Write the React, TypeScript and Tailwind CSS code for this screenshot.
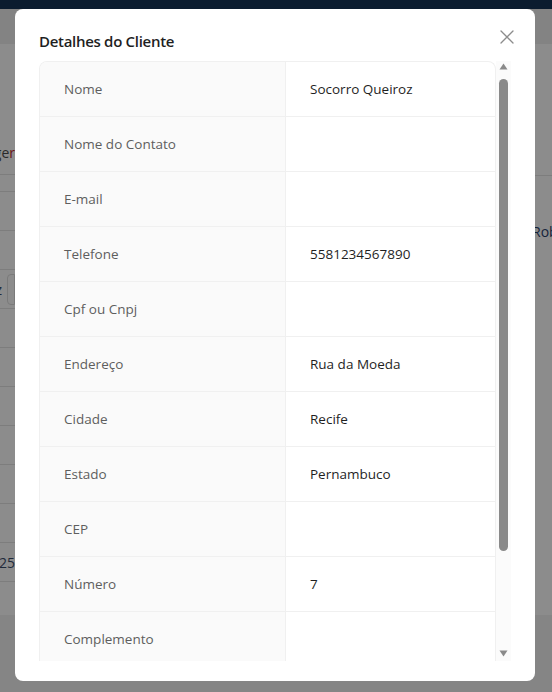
import React from 'react';

interface Field {
  label: string;
  value: string;
}

const fields: Field[] = [
  { label: 'Nome', value: 'Socorro Queiroz' },
  { label: 'Nome do Contato', value: '' },
  { label: 'E-mail', value: '' },
  { label: 'Telefone', value: '5581234567890' },
  { label: 'Cpf ou Cnpj', value: '' },
  { label: 'Endereço', value: 'Rua da Moeda' },
  { label: 'Cidade', value: 'Recife' },
  { label: 'Estado', value: 'Pernambuco' },
  { label: 'CEP', value: '' },
  { label: 'Número', value: '7' },
  { label: 'Complemento', value: '' },
  { label: 'Bairro', value: 'Recife Antigo' },
  { label: 'Observações', value: '' },
];

// linhas da tabela que fica atrás do modal (só aparecem nas bordas)
const bgRows = ['', '', 'z', '', '', '', '', '', '', '25'];

const CloseIcon = () => (
  <svg width="14" height="14" viewBox="0 0 14 14" fill="none">
    <path d="M1 1L13 13M13 1L1 13" stroke="#8c8c8c" strokeWidth="1.3" strokeLinecap="round" />
  </svg>
);

const ScrollBar = () => (
  <div className="w-[15px] shrink-0 bg-[#fbfbfb] flex flex-col items-center pt-[2px] pb-[3px]">
    <svg width="9" height="7" viewBox="0 0 9 7">
      <path d="M4.5 0.5L8.5 6.5H0.5Z" fill="#8a8a8a" />
    </svg>
    <div className="w-[9px] h-[472px] mt-[9px] rounded-full bg-[#8a8a8a]" />
    <div className="flex-1" />
    <svg width="9" height="7" viewBox="0 0 9 7" className="mb-[1px]">
      <path d="M0.5 0.5H8.5L4.5 6.5Z" fill="#8a8a8a" />
    </svg>
  </div>
);

const App: React.FC = () => {
  return (
    <div
      className="relative w-[552px] h-[692px] overflow-hidden bg-[#858585] text-[#0d1b2a]"
      style={{ fontFamily: '"Open Sans", "Noto Sans", sans-serif' }}
    >
      {/* Página por trás do overlay */}
      <div className="h-[9px] bg-[#0b1c2f]" />
      <div className="h-[35px] bg-[#838383]" />
      <div className="h-[571px] bg-[#8c8c8c] flex">
        <div className="w-[15px] shrink-0 flex flex-col">
          <div className="h-[86px]" />
          <div className="h-[44px] flex items-center justify-end whitespace-nowrap text-[14px] text-[#2a2a2a]">
            <span>ge</span>
            <span className="text-[#6b1414]">r</span>
          </div>
          <div className="h-[17px] border-t border-[#7d7d7d]" />
          {bgRows.map((t, i) => (
            <div
              key={i}
              className="h-[39px] border-t border-[#7d7d7d] flex items-center justify-end whitespace-nowrap text-[14px] text-[#1f2a3a]"
            >
              {t === 'z' ? (
                <>
                  <span>z</span>
                  <span className="ml-[5px] w-[8px] h-[31px] border border-[#7a7a7a] rounded-l-[4px] shrink-0" />
                </>
              ) : (
                <span>{t}</span>
              )}
            </div>
          ))}
          <div className="border-t border-[#7d7d7d]" />
        </div>
        <div className="flex-1" />
        <div className="w-[17px] shrink-0 flex flex-col">
          <div className="h-[131px]" />
          <div className="h-[34px] border-t border-[#7d7d7d]" />
          <div className="h-[44px] flex items-center whitespace-nowrap text-[14px] text-[#14233a] -ml-[3px]">
            Rob
          </div>
        </div>
      </div>

      {/* Modal */}
      <div className="absolute left-[15px] top-[9px] w-[520px] h-[672px] bg-white rounded-[8px] pt-[20px] pb-[20px] pl-[24px] pr-[24px] flex flex-col">
        <div className="flex items-center justify-between h-[24px] mb-[8px]">
          <div className="text-[15px] tracking-[-0.3px] font-semibold text-[#1f1f1f] leading-[24px]">
            Detalhes do Cliente
          </div>
          <div className="-mr-[3px] -mt-[9px]">
            <CloseIcon />
          </div>
        </div>

        <div className="flex-1 flex min-h-0">
          <div className="flex-1 min-w-0 overflow-hidden border border-[#f0f0f0] border-b-0 rounded-t-[8px]">
            {fields.map((f, i) => (
              <div
                key={f.label}
                className={i > 0 ? 'flex h-[55px] text-[13.5px] border-t border-[#f0f0f0]' : 'flex h-[54px] text-[13.5px]'}
              >
                <div className="w-[246px] shrink-0 bg-[#fafafa] border-r border-[#f0f0f0] pl-[24px] flex items-center text-[#5e5e5e]">
                  {f.label}
                </div>
                <div className="flex-1 pl-[24px] flex items-center text-[#1f1f1f]">{f.value}</div>
              </div>
            ))}
          </div>
          <ScrollBar />
        </div>
      </div>
    </div>
  );
};

export default App;
